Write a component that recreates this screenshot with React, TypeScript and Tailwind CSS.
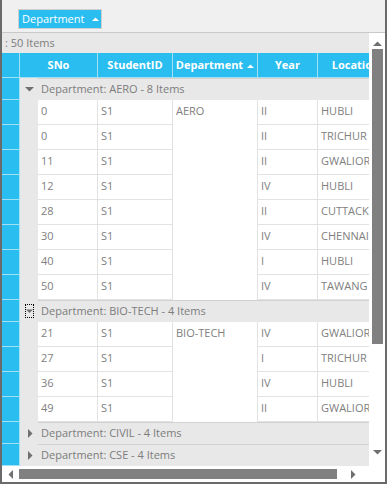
import React from "react";

const BLUE = "bg-[#29bdf0]";

type Row = { sno: string; year: string; loc: string };

const aero: Row[] = [
  { sno: "0", year: "II", loc: "HUBLI" },
  { sno: "0", year: "II", loc: "TRICHUR" },
  { sno: "11", year: "II", loc: "GWALIOR" },
  { sno: "12", year: "IV", loc: "HUBLI" },
  { sno: "28", year: "II", loc: "CUTTACK" },
  { sno: "30", year: "IV", loc: "CHENNAI" },
  { sno: "40", year: "I", loc: "HUBLI" },
  { sno: "50", year: "IV", loc: "TAWANG" },
];

const bio: Row[] = [
  { sno: "21", year: "IV", loc: "GWALIOR" },
  { sno: "27", year: "I", loc: "TRICHUR" },
  { sno: "36", year: "IV", loc: "HUBLI" },
  { sno: "49", year: "II", loc: "GWALIOR" },
];

function Indicator({ h }: { h: string }) {
  return <div className={`w-[18px] shrink-0 ${h} ${BLUE} border-r border-b border-[#a3e0f6] box-border`} />;
}

function DownTri() {
  return (
    <svg width="9" height="5" viewBox="0 0 9 5" className="block">
      <polygon points="0,0 9,0 4.5,4.5" fill="#6f6f6f" />
    </svg>
  );
}

function RightTri() {
  return (
    <svg width="5" height="9" viewBox="0 0 5 9" className="block">
      <polygon points="0,0 4.5,4.5 0,9" fill="#6f6f6f" />
    </svg>
  );
}

function GroupRow({ label, open, focus }: { label: string; open: boolean; focus?: boolean }) {
  return (
    <div className="flex h-[22px] shrink-0">
      <Indicator h="h-[22px]" />
      <div className="w-[18px] shrink-0 h-full bg-[#e8e8e8] flex items-center justify-center">
        {focus ? (
          <div className="w-[9px] h-[14px] border border-dotted border-black flex items-center justify-center">
            <DownTri />
          </div>
        ) : open ? (
          <DownTri />
        ) : (
          <div className="pl-[2px]"><RightTri /></div>
        )}
      </div>
      <div className="flex-1 shrink-0 w-[360px] h-full bg-[#e8e8e8] border-t border-[#d2d2d2] box-border flex items-center pl-[3px] text-[11px] text-[#7c7c7c] whitespace-nowrap">
        {label}
      </div>
    </div>
  );
}

function DataRow({ r, dept }: { r: Row; dept: string }) {
  const cell = "h-full box-border border-r border-[#e2e2e2] pl-[3px] pt-[3px] leading-[16px] whitespace-nowrap";
  return (
    <div className="flex h-[25px] shrink-0 text-[11px] text-[#808080]">
      <Indicator h="h-[25px]" />
      <div className="w-[18px] shrink-0 h-full bg-[#e8e8e8]" />
      <div className={`w-[60px] shrink-0 bg-white border-b ${cell}`}>{r.sno}</div>
      <div className={`w-[75px] shrink-0 bg-white border-b ${cell}`}>S1</div>
      <div className={`w-[85px] shrink-0 bg-white ${cell}`}>{dept}</div>
      <div className={`w-[60px] shrink-0 bg-white border-b ${cell}`}>{r.year}</div>
      <div className={`w-[76px] shrink-0 bg-white border-b ${cell}`}>{r.loc}</div>
    </div>
  );
}

function HeaderCell({ w, children }: { w: string; children: React.ReactNode }) {
  return (
    <div className={`${w} shrink-0 h-full box-border border-r border-[#a3e0f6] flex items-center justify-center text-white font-bold text-[11px] whitespace-nowrap`}>
      {children}
    </div>
  );
}

function SortUp() {
  return (
    <svg width="7" height="4" viewBox="0 0 7 4" className="ml-[4px] mt-[1px]">
      <polygon points="0,4 7,4 3.5,0.5" fill="white" />
    </svg>
  );
}

export default function App() {
  return (
    <div
      className="w-[387px] h-[484px] box-border border-l-2 border-r-2 border-b-2 border-[#6a6a6a] bg-[#f0f0f0] flex flex-col overflow-hidden"
      style={{ fontFamily: '"Open Sans", "Noto Sans", sans-serif' }}
    >
      {/* toolbar */}
      <div className="h-[33px] shrink-0 border-b border-[#c9c9c9] box-border pl-[16px] pt-[5px]">
        <div className={`inline-flex items-center h-[20px] w-[84px] box-border border border-[#cfcfcf] ${BLUE} pl-[3px] text-white text-[11px] whitespace-nowrap`}>
          Department
          <svg width="7" height="4" viewBox="0 0 7 4" className="ml-[8px] shrink-0">
            <polygon points="0,4 7,4 3.5,0.5" fill="white" />
          </svg>
        </div>
      </div>

      <div className="flex flex-1 min-h-0">
        {/* main grid */}
        <div className="w-[367px] shrink-0 flex flex-col">
          <div className="h-[20px] shrink-0 bg-[#e8e8e8] flex items-center pl-[3px] text-[11px] text-[#7c7c7c]">
            : 50 Items
          </div>
          <div className="flex-1 min-h-0 overflow-hidden flex flex-col bg-white">
            <div className={`flex h-[25px] shrink-0 ${BLUE} border-b border-[#a3e0f6] box-border`}>
              <div className="w-[18px] shrink-0 h-full border-r border-[#a3e0f6] box-border" />
              <HeaderCell w="w-[78px]">SNo</HeaderCell>
              <HeaderCell w="w-[75px]">StudentID</HeaderCell>
              <HeaderCell w="w-[85px]">
                Department
                <SortUp />
              </HeaderCell>
              <HeaderCell w="w-[60px]">Year</HeaderCell>
              <HeaderCell w="w-[76px]">Location</HeaderCell>
            </div>
            <GroupRow label="Department: AERO - 8 Items" open />
            {aero.map((r, i) => (
              <DataRow key={"a" + i} r={r} dept={i === 0 ? "AERO" : ""} />
            ))}
            <GroupRow label="Department: BIO-TECH - 4 Items" open focus />
            {bio.map((r, i) => (
              <DataRow key={"b" + i} r={r} dept={i === 0 ? "BIO-TECH" : ""} />
            ))}
            <GroupRow label="Department: CIVIL - 4 Items" open={false} />
            <GroupRow label="Department: CSE - 4 Items" open={false} />
          </div>
          {/* horizontal scrollbar */}
          <div className="h-[16px] shrink-0 bg-white flex items-center">
            <div className="w-[17px] shrink-0 flex items-center justify-center">
              <svg width="5" height="9" viewBox="0 0 5 9">
                <polygon points="5,0 0.5,4.5 5,9" fill="#6f6f6f" />
              </svg>
            </div>
            <div className="w-[318px] h-[10px] bg-[#808080]" />
            <div className="flex-1 flex items-center justify-center">
              <svg width="5" height="9" viewBox="0 0 5 9">
                <polygon points="0,0 4.5,4.5 0,9" fill="#6f6f6f" />
              </svg>
            </div>
          </div>
        </div>
        {/* vertical scrollbar */}
        <div className="w-[16px] shrink-0 bg-white flex flex-col items-center">
          <div className="h-[14px] shrink-0 flex items-end pb-[1px]">
            <svg width="9" height="5" viewBox="0 0 9 5">
              <polygon points="0,5 9,5 4.5,0.5" fill="#6f6f6f" />
            </svg>
          </div>
          <div className="mt-[2px] w-[11px] h-[295px] bg-[#808080]" />
          <div className="mt-[106px] shrink-0">
            <svg width="9" height="5" viewBox="0 0 9 5">
              <polygon points="0,0 9,0 4.5,4.5" fill="#6f6f6f" />
            </svg>
          </div>
        </div>
      </div>
    </div>
  );
}
